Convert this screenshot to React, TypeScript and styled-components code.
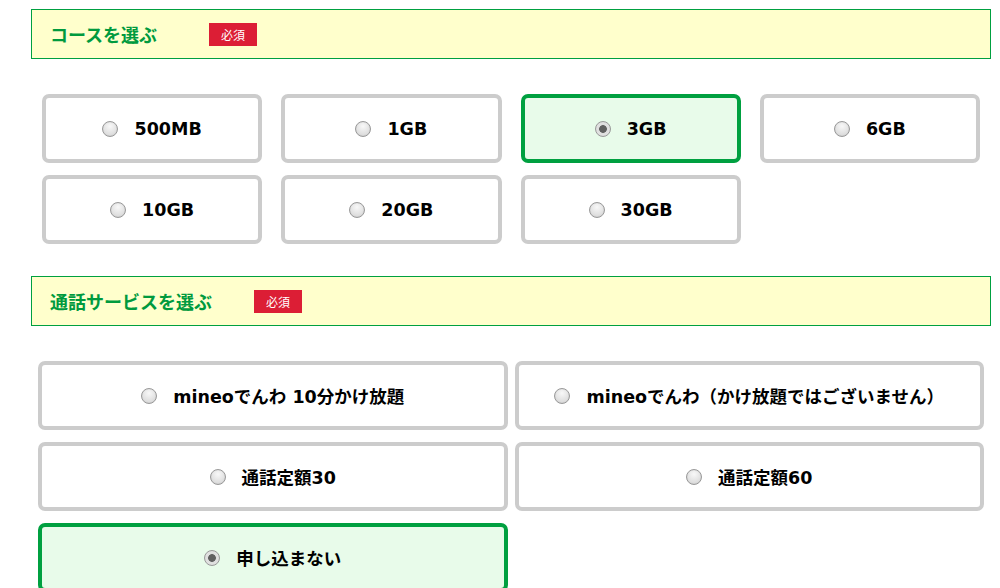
import React from 'react';
import styled, { createGlobalStyle } from 'styled-components';

const courses = ['500MB', '1GB', '3GB', '6GB', '10GB', '20GB', '30GB'];
const calls = [
    'mineoでんわ 10分かけ放題',
    'mineoでんわ（かけ放題ではございません）',
    '通話定額30',
    '通話定額60',
    '申し込まない',
];

const App: React.FC = () => {
    return (
        <>
            <GlobalStyle/>
            <Page>
                <SectionHeader>
                    <Title>コースを選ぶ</Title>
                    <Required offset={52}>必須</Required>
                </SectionHeader>
                <CourseGrid>
                    {courses.map(c => (
                        <Option key={c} active={c === '3GB'}>
                            <Radio checked={c === '3GB'}/>
                            {c}
                        </Option>
                    ))}
                </CourseGrid>
                <SectionHeader>
                    <Title>通話サービスを選ぶ</Title>
                    <Required offset={42}>必須</Required>
                </SectionHeader>
                <CallGrid>
                    {calls.map(c => (
                        <Option key={c} active={c === '申し込まない'}>
                            <Radio checked={c === '申し込まない'}/>
                            {c}
                        </Option>
                    ))}
                </CallGrid>
            </Page>
        </>
    );
};

export default App;

const GlobalStyle = createGlobalStyle`
  body {
    margin: 0;
    background: #fff;
    font-family: "DejaVu Sans", "Noto Sans CJK JP", sans-serif;
  }
`;

const Page = styled.div`
  width: 960px;
  padding: 9px 0 0 31px;
  display: flex;
  flex-direction: column;
`;

const SectionHeader = styled.div`
  box-sizing: border-box;
  height: 50px;
  display: flex;
  align-items: center;
  padding-left: 18px;
  background: #ffffcc;
  border: 1px solid #00a040;
  & + * {
    margin-top: 35px;
  }
`;

const Title = styled.div`
  font-family: "Noto Sans CJK JP", sans-serif;
  font-size: 18px;
  font-weight: bold;
  color: #009a3e;
`;

const Required = styled.span<{ offset: number }>`
  margin-left: ${p => p.offset}px;
  width: 48px;
  height: 23px;
  display: flex;
  align-items: center;
  justify-content: center;
  background: #dc1e35;
  color: #fff;
  font-family: "Noto Sans CJK JP", sans-serif;
  font-size: 12px;
`;

const CourseGrid = styled.div`
  display: grid;
  grid-template-columns: repeat(4, 1fr);
  grid-auto-rows: 69px;
  column-gap: 19px;
  row-gap: 12px;
  padding: 0 11px 0 11px;
  margin-bottom: 32px;
`;

const CallGrid = styled.div`
  display: grid;
  grid-template-columns: repeat(2, 1fr);
  grid-auto-rows: 69px;
  column-gap: 7px;
  row-gap: 12px;
  width: 946px;
  margin-left: 7px;
`;

const Option = styled.label<{ active?: boolean }>`
  box-sizing: border-box;
  display: flex;
  align-items: center;
  justify-content: center;
  border: 4px solid ${p => p.active ? '#00a040' : '#cccccc'};
  border-radius: 7px;
  background: ${p => p.active ? '#e8fbea' : '#fff'};
  font-size: 17.5px;
  font-weight: bold;
  color: #000;
  cursor: pointer;
`;

const Radio = styled.span<{ checked?: boolean }>`
  box-sizing: border-box;
  flex-shrink: 0;
  width: 16px;
  height: 16px;
  margin-right: 16px;
  border-radius: 50%;
  border: 1px solid #999;
  background: ${p => p.checked
    ? 'radial-gradient(circle, #606060 0 3.5px, #dcdcdc 4.2px, #f0f0f0 100%)'
    : 'radial-gradient(circle at 50% 30%, #f8f8f8, #d2d2d2)'};
  box-shadow: inset 0 0 1px rgba(0, 0, 0, 0.15);
`;
